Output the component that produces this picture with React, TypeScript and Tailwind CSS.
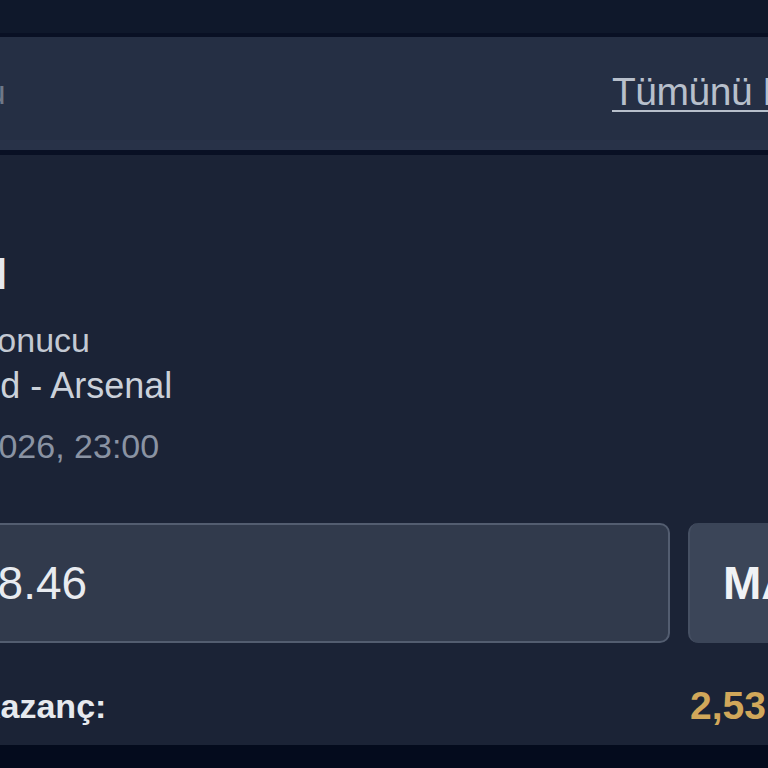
export default function App() {
  return (
    <div className="w-[768px] h-[768px] overflow-hidden bg-[#0f182b] flex flex-col font-['Liberation_Sans',Arial,sans-serif]">
      <div className="h-[33px] shrink-0 bg-[#0f182b]" />
      <div className="h-[4px] shrink-0 bg-[#091024]" />
      <header className="h-[113px] shrink-0 bg-[#252f44] border-b-[10px] border-[#283248] flex items-start pt-[32px]">
        <div className="flex-1 min-w-0">
          <span className="block -ml-[206px] whitespace-nowrap text-[34px] leading-[46px] text-[#6f7888]">Bahis Kuponu</span>
        </div>
        <div className="w-[156px] shrink-0 whitespace-nowrap">
          <a className="text-[39px] leading-[46px] text-[#b7bfcb] underline decoration-2 underline-offset-[5px] tracking-[-0.5px]">Tümünü Kaldır</a>
        </div>
      </header>
      <div className="h-[5px] shrink-0 bg-[#091024]" />
      <main className="flex-1 bg-[#1b2336] pt-[95px] flex flex-col overflow-hidden">
        <div className="-ml-[147px] whitespace-nowrap text-[42px] leading-[50px] font-bold text-[#e6e9ee]">Arsenal</div>
        <div className="mt-[17px] -ml-[99px] whitespace-nowrap text-[34px] leading-[46px] text-[#c3c9d3]">Maç Sonucu</div>
        <div className="-ml-[192px] whitespace-nowrap text-[36px] leading-[46px] text-[#cbd1da]">Leeds United - Arsenal</div>
        <div className="mt-[14px] -ml-[115px] whitespace-nowrap text-[34px] leading-[46px] text-[#8a93a3]">17.05.2026, 23:00</div>
        <div className="mt-[54px] h-[120px] flex gap-[18px] -ml-[30px]">
          <div className="w-[700px] shrink-0 rounded-[10px] border-2 border-[#535d70] bg-[#313a4c] flex items-center pl-[0px]">
            <span className="text-[46px] text-[#e8ebf0] whitespace-nowrap">28.46</span>
          </div>
          <button className="w-[200px] shrink-0 rounded-[10px] bg-[#3b4558] border-l-2 border-[#465063] flex items-center pl-[33px] text-[46px] font-bold text-[#f0f2f5]">MAX</button>
        </div>
        <div className="mt-[40px] flex items-center h-[46px]">
          <div className="flex-1 min-w-0">
            <span className="block -ml-[24px] whitespace-nowrap text-[34px] leading-[46px] font-bold text-[#e6e9ee]">Kazanç:</span>
          </div>
          <div className="w-[78px] shrink-0 whitespace-nowrap text-[39px] leading-[46px] font-bold text-[#d1a75a]">2,53 ₺</div>
        </div>
      </main>
      <div className="h-[23px] shrink-0 bg-[#040b1d]" />
    </div>
  );
}
